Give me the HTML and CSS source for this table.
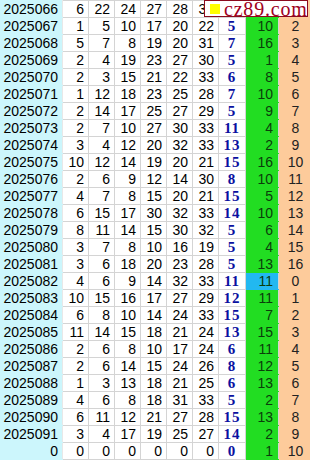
FILE: index.html
```html
<!DOCTYPE html>
<html lang="zh-CN">
<head>
  <meta charset="UTF-8">
  <title>cz89.com 走势</title>
  <link rel="stylesheet" href="styles.css">
</head>
<body>

  <div class="wrap">
    <div class="logo"><span class="logo-mark"></span><span class="logo-text">cz89.com</span></div>
    <table class="chart" id="chart"></table>
  </div>

  <script>
    // issue, six red, blue, green count, orange count (hidden under the logo = "")
    const rows = [
      ["2025066", [6, 22, 24, 27, 28, 33], "", "", ""],
      ["2025067", [1, 5, 10, 17, 20, 22], 5, 10, 2],
      ["2025068", [5, 7, 8, 19, 20, 31], 7, 16, 3],
      ["2025069", [2, 4, 19, 23, 27, 30], 5, 1, 4],
      ["2025070", [2, 3, 15, 21, 22, 33], 6, 8, 5],
      ["2025071", [1, 12, 18, 23, 25, 28], 7, 10, 6],
      ["2025072", [2, 14, 17, 25, 27, 29], 5, 9, 7],
      ["2025073", [2, 7, 10, 27, 30, 33], 11, 4, 8],
      ["2025074", [3, 4, 12, 20, 32, 33], 13, 2, 9],
      ["2025075", [10, 12, 14, 19, 20, 21], 15, 16, 10],
      ["2025076", [2, 6, 9, 12, 14, 30], 8, 10, 11],
      ["2025077", [4, 7, 8, 15, 20, 21], 15, 5, 12],
      ["2025078", [6, 15, 17, 30, 32, 33], 14, 10, 13],
      ["2025079", [8, 11, 14, 15, 30, 32], 5, 6, 14],
      ["2025080", [3, 7, 8, 10, 16, 19], 5, 4, 15],
      ["2025081", [3, 6, 18, 20, 23, 28], 5, 13, 16],
      ["2025082", [4, 6, 9, 14, 32, 33], 11, 11, 0],
      ["2025083", [10, 15, 16, 17, 27, 29], 12, 11, 1],
      ["2025084", [6, 8, 10, 14, 24, 33], 15, 7, 2],
      ["2025085", [11, 14, 15, 18, 21, 24], 13, 15, 3],
      ["2025086", [2, 6, 8, 10, 17, 24], 6, 11, 4],
      ["2025087", [2, 6, 14, 15, 24, 26], 8, 12, 5],
      ["2025088", [1, 3, 13, 18, 21, 25], 6, 13, 6],
      ["2025089", [4, 6, 8, 18, 31, 33], 5, 2, 7],
      ["2025090", [6, 11, 12, 21, 27, 28], 15, 13, 8],
      ["2025091", [3, 4, 17, 19, 25, 27], 14, 2, 9],
      ["0", [0, 0, 0, 0, 0, 0], 0, 1, 10]
    ];

    const table = document.getElementById('chart');
    rows.forEach(r => {
      const tr = document.createElement('tr');
      let html = `<td class="issue">${r[0]}</td>`;
      r[1].forEach(n => { html += `<td class="red">${n}</td>`; });
      html += `<td class="blue">${r[2]}</td>`;
      const hit = r[3] !== "" && r[3] === r[2];
      html += `<td class="green${hit ? ' hit' : ''}">${r[3]}</td>`;
      html += `<td class="orange">${r[4]}</td>`;
      tr.innerHTML = html;
      table.appendChild(tr);
    });
  </script>

</body>
</html>
```

FILE: styles.css
```css
body {
  margin: 0;
  background: #fff;
  font-family: 'Liberation Sans', Arial, sans-serif;
  font-size: 14px;
  color: #000;
}
.wrap {
  position: relative;
  width: 310px;
}
.chart {
  border-collapse: collapse;
  table-layout: fixed;
  width: 310px;
}
.chart td {
  height: 16px;
  padding: 0 4px 0 0;
  border: 1px solid #d4d4d4;
  text-align: right;
  line-height: 16px;
  white-space: nowrap;
  overflow: hidden;
}
.issue {
  width: 57px;
  background: #ccf6fc;
  border-color: #ccf6fc !important;
  border-right-color: #e8e8e8 !important;
}
.red {
  width: 21px;
}
.blue {
  width: 26px;
  padding: 0 !important;
  text-align: center !important;
  font-family: 'Liberation Serif', 'Times New Roman', serif;
  font-weight: bold;
  font-size: 15px;
  letter-spacing: 1px;
  color: #0a10a0;
}
.green {
  width: 27px;
  padding-right: 5px !important;
  background: #22dd22;
  border-top-color: #22dd22 !important;
  border-bottom-color: #22dd22 !important;
  color: #0b3d0b;
}
.green.hit {
  background: #22b8f0;
  border-top-color: #22b8f0 !important;
  border-bottom-color: #22b8f0 !important;
}
.orange {
  width: 33px;
  padding: 0 !important;
  text-align: center !important;
  background: #fdcb9b;
  border-color: #fdcb9b !important;
  color: #222;
}
.logo {
  position: absolute;
  top: 0;
  left: 204px;
  box-sizing: border-box;
  width: 104px;
  height: 17px;
  border: 1px solid #8b0a1e;
  background: #fff;
  display: flex;
  align-items: center;
  gap: 4px;
  padding-left: 5px;
}
.logo-mark {
  flex: none;
  width: 10px;
  height: 10px;
  background: #ffff00;
}
.logo-text {
  font-family: 'Liberation Serif', 'Times New Roman', serif;
  font-size: 20px;
  letter-spacing: 0.8px;
  line-height: 14px;
  color: #a0001e;
}
```
